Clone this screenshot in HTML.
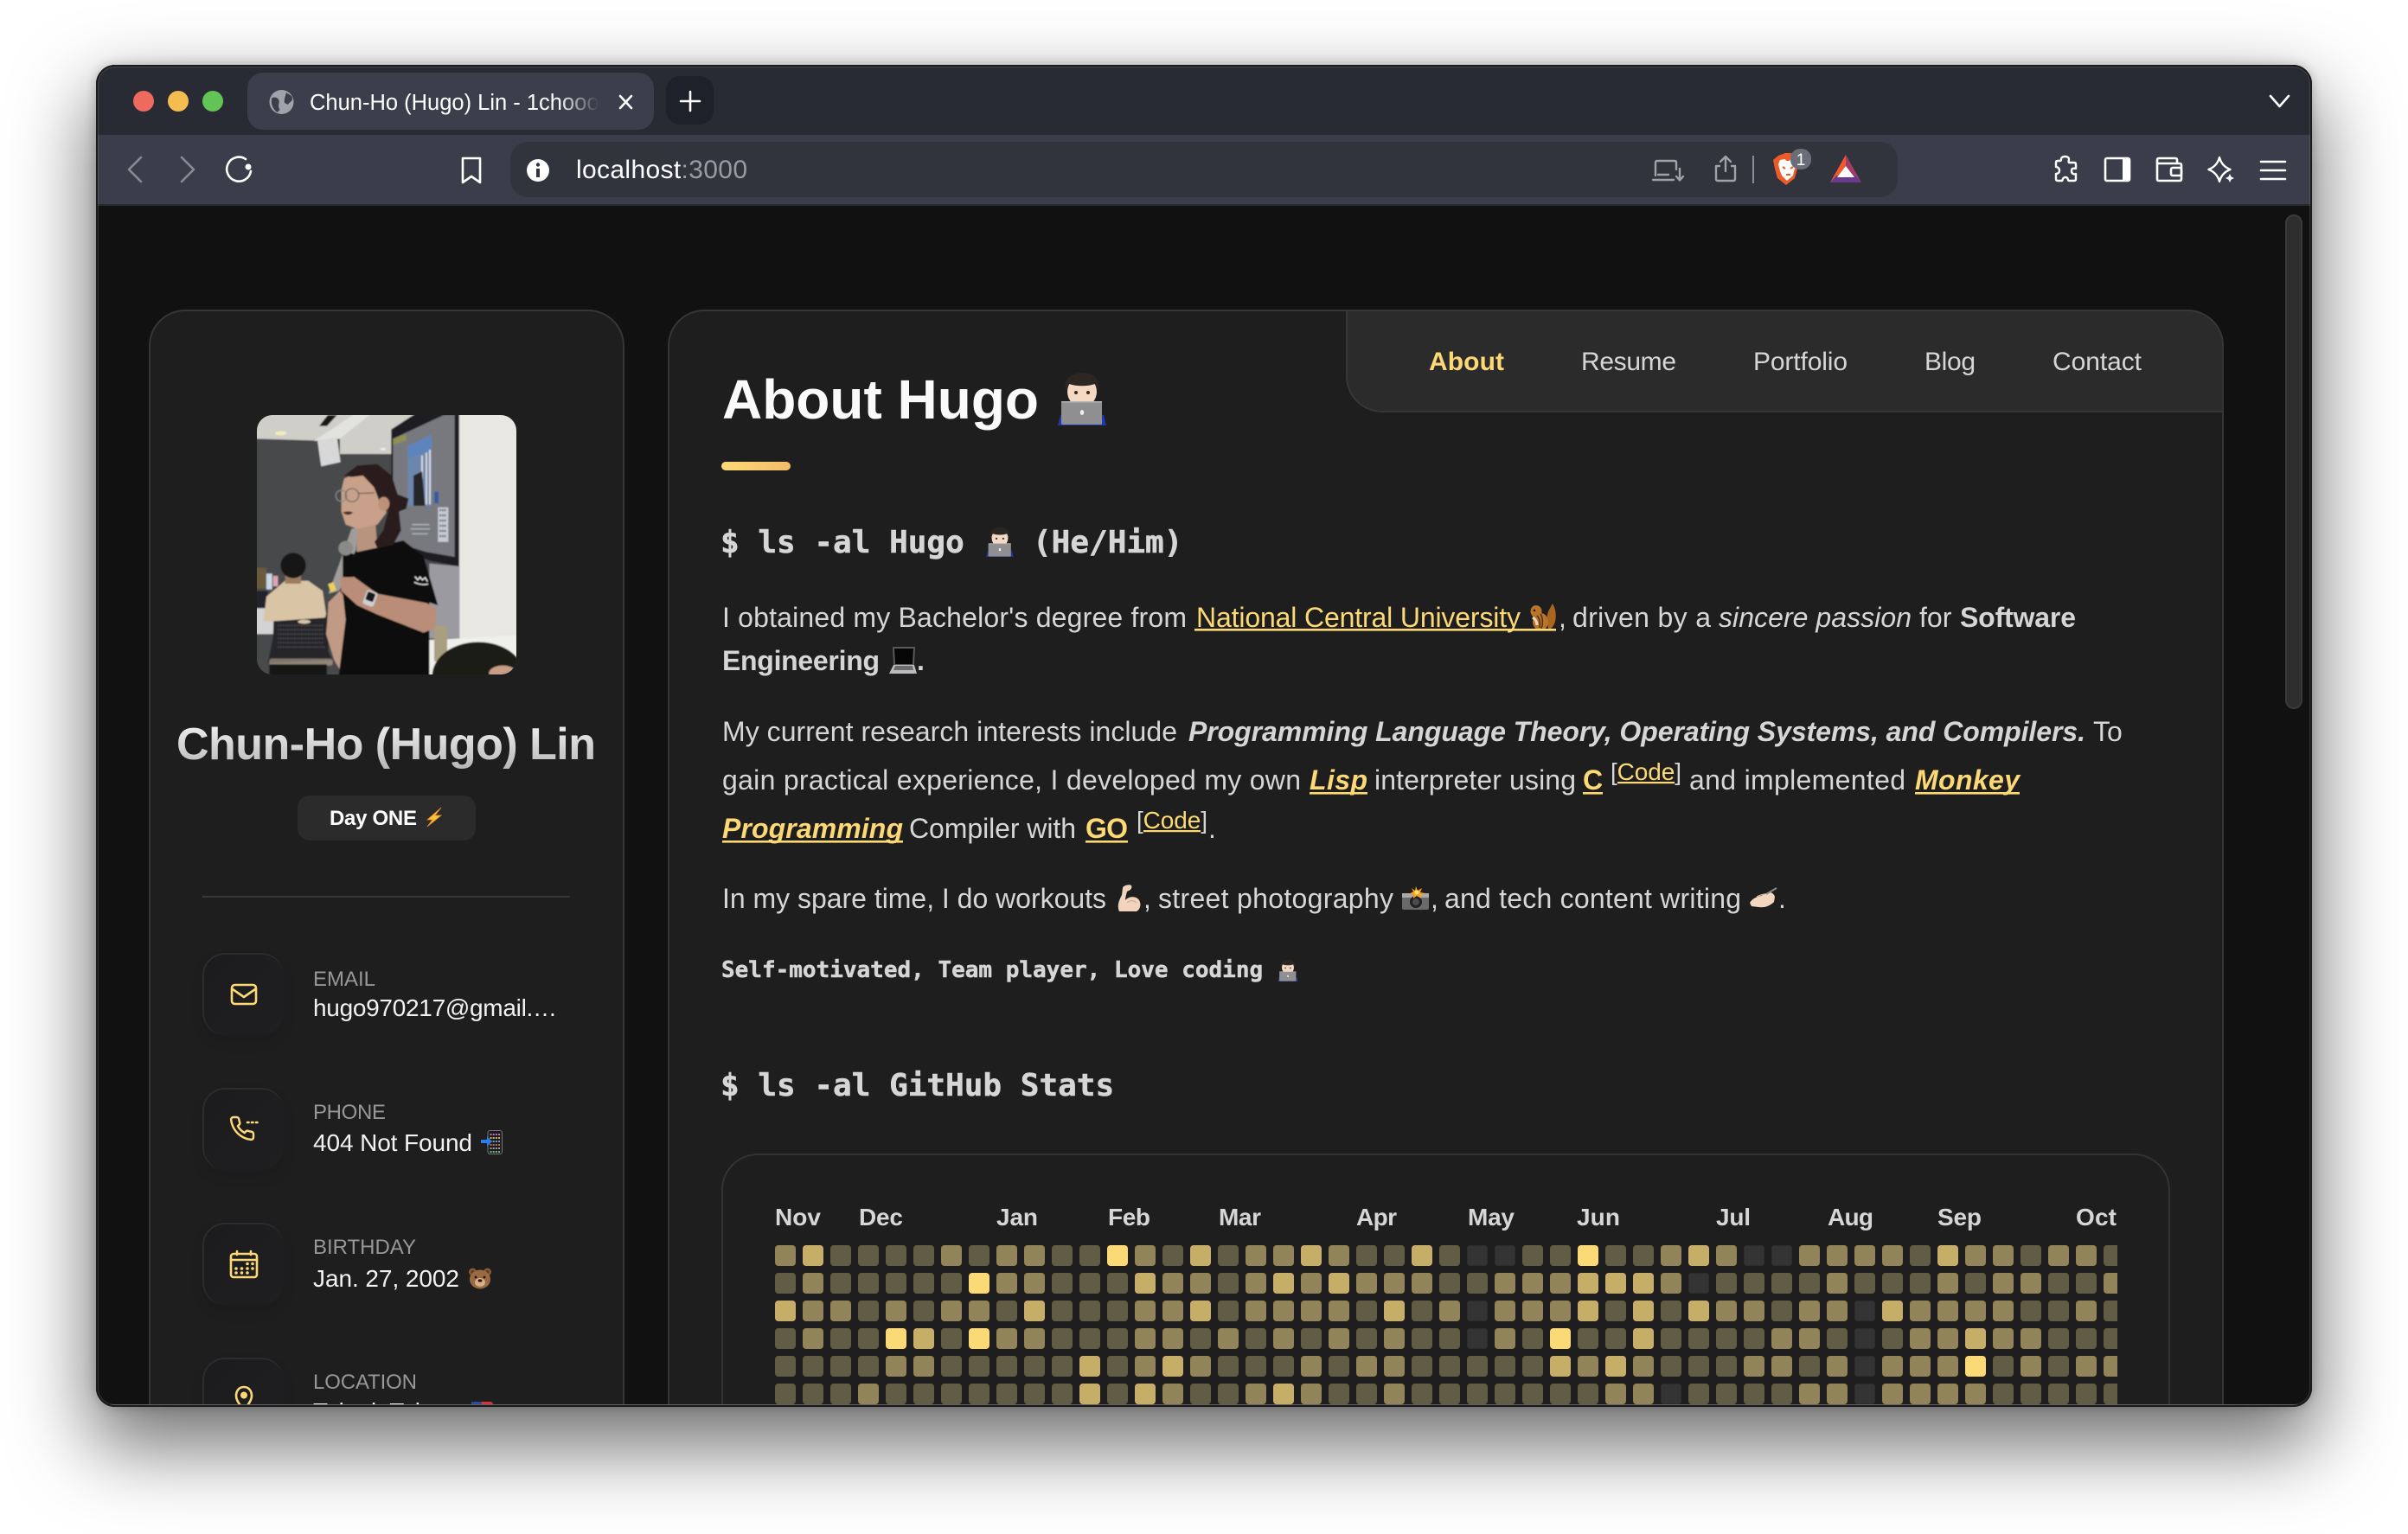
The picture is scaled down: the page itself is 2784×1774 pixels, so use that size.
<!DOCTYPE html>
<html lang="en">
<head>
<meta charset="utf-8">
<title>Chun-Ho (Hugo) Lin - 1chooo</title>
<style>
html,body{margin:0;padding:0;background:#fff;width:2784px;height:1774px;overflow:hidden}
*{box-sizing:border-box}
.abs,.shadow,.win,.in,.card,.ibox,.grid{position:absolute}
.shadow{left:112px;top:76px;width:2560px;height:1550px;border-radius:22px;background:#111;box-shadow:0 40px 90px 8px rgba(0,0,0,.55),0 0 14px rgba(0,0,0,.28)}
.win{left:111px;top:75px;width:2562px;height:1552px;border-radius:22px;overflow:hidden;background:#111}
.in{left:-111px;top:-75px;width:2784px;height:1774px}
.ring{position:absolute;left:111px;top:75px;width:2562px;height:1552px;border-radius:22px;border:2px solid #1a1a1a;box-shadow:inset 0 0 0 1px rgba(255,255,255,.13)}
.card{background:#1e1e1f;border:2px solid #363636;border-radius:42px}
.ibox{left:234px;width:94px;height:95px;border-radius:26px;background:linear-gradient(135deg,#1c1c1f,#1f1f21);border-top:2px solid #2c2c2e;border-left:2px solid #2c2c2e;box-shadow:0 8px 16px rgba(0,0,0,.08)}
.grid{left:896px;top:1440px;width:1552px;height:186px;overflow:hidden;display:grid;grid-template-columns:repeat(49,24px);grid-auto-rows:24px;gap:8px}
.grid i{display:block;border-radius:4px}
.a{background:#343434;box-shadow:inset 0 0 0 1px #2e2e2e}.b{background:#635c45}.c{background:#918458}.d{background:#c6ae69}.e{background:#fbd977}
svg text{font-family:"Liberation Sans",Arial,sans-serif}
.m{font-family:"DejaVu Sans Mono","Liberation Mono",monospace!important;font-weight:700;fill:#d6d6d6;stroke:#d6d6d6;stroke-width:.5px}
.t{font-size:32px;fill:#d6d6d6}
.bd{font-weight:700}
.it{font-style:italic}
.y{fill:#fdd976}
.lab{font-size:24px;fill:#979797}
.val{font-size:28px;fill:#f2f2f2}
.nav{font-size:30px;fill:#d6d6d6}
.mo{font-size:28px;font-weight:700;fill:#d6d6d6}
.ol{fill:none;stroke:#fff;stroke-width:2.6;stroke-linecap:round;stroke-linejoin:round}
.gi{fill:none;stroke:#a0a2a8;stroke-width:2.4;stroke-linecap:round;stroke-linejoin:round}
.yi{fill:none;stroke:#fdd976;stroke-width:2.6;stroke-linecap:round;stroke-linejoin:round}
</style>
</head>
<body>
<div class="shadow"></div>
<div class="win"><div class="in">

<!-- browser chrome -->
<div class="abs" style="left:0;top:0;width:2784px;height:156px;background:#292b34"></div>
<div class="abs" style="left:0;top:156px;width:2784px;height:80px;background:#3b3e4a"></div>
<div class="abs" style="left:0;top:236px;width:2784px;height:2px;background:#2a2c33"></div>
<div class="abs" style="left:286px;top:84px;width:470px;height:66px;border-radius:18px;background:#3c3f4b"></div>
<div class="abs" style="left:770px;top:88px;width:55px;height:56px;border-radius:16px;background:#1f212a"></div>
<div class="abs" style="left:590px;top:164px;width:1604px;height:64px;border-radius:20px;background:#31333d"></div>

<!-- page -->
<div class="abs" style="left:0;top:238px;width:2784px;height:1540px;background:#111"></div>

<div class="abs" style="left:2642px;top:248px;width:20px;height:572px;border-radius:10px;background:#2e2e2e;border:2px solid #3a3a3a"></div>

<div class="card" style="left:172px;top:358px;width:550px;height:1400px"></div>
<div class="card" style="left:772px;top:358px;width:1799px;height:1400px"></div>
<div class="abs" style="left:1556px;top:358px;width:1015px;height:119px;background:#2b2b2c;border:2px solid #363636;border-radius:0 42px 0 42px"></div>

<div class="abs" style="left:344px;top:920px;width:206px;height:52px;border-radius:14px;background:#2b2b2c"></div>
<div class="abs" style="left:234px;top:1036px;width:425px;height:2px;background:#383838"></div>

<div class="ibox" style="top:1102px"></div>
<div class="ibox" style="top:1258px"></div>
<div class="ibox" style="top:1414px"></div>
<div class="ibox" style="top:1570px"></div>

<div class="abs" style="left:834px;top:534px;width:80px;height:10px;border-radius:5px;background:linear-gradient(90deg,#fdd976,#f5bb6a)"></div>

<div class="abs" style="left:834px;top:1334px;width:1675px;height:400px;border-radius:42px;border:2px solid #333"></div>

<!-- photo -->
<div class="abs" style="left:297px;top:480px;width:300px;height:300px;border-radius:18px;overflow:hidden;background:#4c4f52">
<svg width="300" height="300" viewBox="52 30 900 900" style="display:block">
<defs><filter id="bl" x="-5%" y="-5%" width="110%" height="110%"><feGaussianBlur stdDeviation="2.6"/></filter></defs>
<g filter="url(#bl)">
<rect x="40" y="20" width="930" height="930" fill="#47494c"/>
<polygon points="40,20 640,20 520,80 520,165 340,165 340,112 250,118 40,112" fill="#cfcec9"/>
<polygon points="250,120 400,20 455,20 340,112" fill="#e2e2de"/>
<polygon points="268,68 298,30 330,30 295,68" fill="#151515"/>
<ellipse cx="135" cy="93" rx="20" ry="7" fill="#f4efb8"/>
<ellipse cx="490" cy="148" rx="10" ry="4" fill="#f0f0f0"/>
<polygon points="262,118 330,108 342,193 275,208" fill="#d8d8d8"/>
<polygon points="518,80 610,20 752,20 752,555 650,535 518,480" fill="#1d1e20"/>
<polygon points="524,112 700,30 738,30 738,522 640,505 524,470" fill="#77797f"/>
<polygon points="524,112 570,96 570,118 524,134" fill="#8f8f52"/>
<polygon points="575,138 658,98 658,345 575,345" fill="#6d86ad"/>
<polygon points="575,138 658,98 658,150 575,180" fill="#5d84bd"/>
<path d="M625 170V340M640 160V340M652 150V340" stroke="#d8d8dc" stroke-width="6"/>
<polygon points="595,240 625,225 635,345 595,345" fill="#25262a"/>
<rect x="668" y="296" width="14" height="40" fill="#3858a0"/>
<rect x="680" y="350" width="36" height="120" fill="#c8cbd2"/>
<path d="M686 360H710M686 378H710M686 396H710M686 414H710M686 432H710M686 450H710" stroke="#444a66" stroke-width="7" stroke-dasharray="5 3"/>
<path d="M590 410H650M585 425H652M590 442H645" stroke="#b5b8b6" stroke-width="4"/>
<rect x="754" y="20" width="210" height="920" fill="#e9e7e1"/>
<polygon points="650,545 755,555 755,805 650,805" fill="#9a9aa0"/>
<polygon points="650,810 950,795 960,940 650,940" fill="#efefeb"/>
<rect x="667" y="760" width="45" height="125" rx="5" fill="#a89e80"/>
<rect x="40" y="560" width="45" height="72" fill="#6b5a3a"/>
<rect x="85" y="580" width="20" height="55" fill="#c8d8e8"/>
<rect x="108" y="588" width="17" height="36" fill="#dfa6b4"/>
<rect x="40" y="640" width="50" height="60" fill="#20232a"/>
<rect x="40" y="700" width="70" height="90" fill="#d3d3d3"/>
<polygon points="75,745 85,660 150,605 230,605 280,640 292,720 285,745" fill="#d9c4a6"/>
<rect x="150" y="585" width="55" height="30" fill="#9e7a60"/>
<ellipse cx="178" cy="552" rx="44" ry="44" fill="#191512"/>
<polygon points="110,745 300,732 300,850 315,880 90,890 108,800" fill="#26262a"/>
<path d="M125 760H285M125 775H285M125 790H285M125 805H285M125 820H285M125 835H290" stroke="#5a5a5a" stroke-width="5" stroke-dasharray="3 5"/>
<ellipse cx="216" cy="747" rx="22" ry="7" fill="#d9c4a6"/>
<rect x="95" y="875" width="220" height="24" rx="8" fill="#d9c4a6" opacity=".5"/>
<rect x="95" y="895" width="200" height="40" fill="#161616"/>
<polygon points="335,640 365,600 395,500 405,420 380,425 340,540 300,650" fill="#9e9d9a"/>
<polygon points="300,680 340,640 375,690 360,760 350,930 320,880 292,790 298,720" fill="#c09a84"/>
<rect x="303" y="612" width="20" height="30" fill="#ecd05a" transform="rotate(-20 313 627)"/>
<polygon points="395,500 470,485 560,465 630,520 680,690 650,680 650,940 335,940 360,740 345,600" fill="#111"/>
<polygon points="380,585 470,650 640,682 675,700 670,770 630,785 470,722 400,690 345,640 340,595" fill="#b98d77"/>
<rect x="350" y="510" width="38" height="82" rx="6" fill="#111"/>
<circle cx="360" cy="492" r="25" fill="#8a8a88"/>
<rect x="425" y="640" width="40" height="52" rx="8" fill="#cfcfcf" transform="rotate(20 445 666)"/>
<rect x="432" y="645" width="28" height="30" rx="5" fill="#16181a" transform="rotate(20 445 660)"/>
<path d="M600 590l10 12 8-10 8 10 10-8 8 14M598 610q25 12 48 6" stroke="#f0f0f0" stroke-width="4" fill="none"/>
<polygon points="400,390 462,390 470,490 398,505" fill="#b8947e"/>
<polygon points="345,290 355,250 400,230 470,240 500,330 500,370 470,410 400,425 360,410 352,385 345,365" fill="#c9a08a"/>
<path d="M355 240L400 205 470 200 520 240 540 305 578 320 570 355 545 365 552 430 525 480 470 492 460 470 490 430 508 362 482 345 470 310 458 280 420 240 380 245Z" fill="#2a1f1a"/>
<ellipse cx="492" cy="338" rx="20" ry="24" fill="#bd917a"/>
<circle cx="345" cy="310" r="19" fill="none" stroke="#8a8a8a" stroke-width="4"/>
<circle cx="382" cy="308" r="23" fill="none" stroke="#6a6a6a" stroke-width="4"/>
<path d="M404 302L460 300" stroke="#444" stroke-width="3"/>
<path d="M350 368q18-8 36 0q-18 16-36 0Z" fill="#4a2620"/>
<ellipse cx="820" cy="935" rx="160" ry="118" fill="#1e1a18"/>
<ellipse cx="905" cy="925" rx="48" ry="26" fill="#c99e86"/>
</g>
</svg>
</div>

<!-- grid -->
<div class="grid">
<i class=c></i><i class=d></i><i class=b></i><i class=b></i><i class=b></i><i class=b></i><i class=c></i><i class=b></i><i class=c></i><i class=c></i><i class=b></i><i class=b></i><i class=e></i><i class=c></i><i class=b></i><i class=d></i><i class=b></i><i class=c></i><i class=c></i><i class=d></i><i class=c></i><i class=b></i><i class=b></i><i class=d></i><i class=b></i><i class=a></i><i class=a></i><i class=b></i><i class=b></i><i class=e></i><i class=b></i><i class=b></i><i class=c></i><i class=d></i><i class=c></i><i class=a></i><i class=a></i><i class=c></i><i class=c></i><i class=c></i><i class=c></i><i class=b></i><i class=d></i><i class=c></i><i class=c></i><i class=b></i><i class=c></i><i class=c></i><i class=b></i>
<i class=b></i><i class=c></i><i class=b></i><i class=b></i><i class=b></i><i class=b></i><i class=b></i><i class=e></i><i class=c></i><i class=c></i><i class=b></i><i class=b></i><i class=b></i><i class=d></i><i class=c></i><i class=c></i><i class=b></i><i class=c></i><i class=d></i><i class=c></i><i class=d></i><i class=c></i><i class=c></i><i class=c></i><i class=b></i><i class=b></i><i class=c></i><i class=c></i><i class=c></i><i class=d></i><i class=d></i><i class=d></i><i class=c></i><i class=a></i><i class=b></i><i class=b></i><i class=b></i><i class=b></i><i class=c></i><i class=b></i><i class=b></i><i class=b></i><i class=c></i><i class=b></i><i class=c></i><i class=c></i><i class=b></i><i class=b></i><i class=c></i>
<i class=d></i><i class=c></i><i class=c></i><i class=b></i><i class=c></i><i class=b></i><i class=c></i><i class=c></i><i class=b></i><i class=d></i><i class=b></i><i class=b></i><i class=b></i><i class=c></i><i class=c></i><i class=d></i><i class=b></i><i class=c></i><i class=c></i><i class=c></i><i class=c></i><i class=b></i><i class=d></i><i class=b></i><i class=c></i><i class=a></i><i class=c></i><i class=c></i><i class=c></i><i class=d></i><i class=b></i><i class=d></i><i class=b></i><i class=d></i><i class=c></i><i class=c></i><i class=b></i><i class=c></i><i class=c></i><i class=a></i><i class=d></i><i class=c></i><i class=c></i><i class=c></i><i class=c></i><i class=b></i><i class=b></i><i class=c></i><i class=b></i>
<i class=b></i><i class=c></i><i class=b></i><i class=b></i><i class=e></i><i class=d></i><i class=b></i><i class=e></i><i class=c></i><i class=c></i><i class=b></i><i class=b></i><i class=b></i><i class=c></i><i class=c></i><i class=b></i><i class=c></i><i class=b></i><i class=c></i><i class=b></i><i class=c></i><i class=b></i><i class=c></i><i class=b></i><i class=b></i><i class=a></i><i class=c></i><i class=b></i><i class=e></i><i class=b></i><i class=b></i><i class=d></i><i class=b></i><i class=b></i><i class=b></i><i class=b></i><i class=c></i><i class=c></i><i class=b></i><i class=a></i><i class=b></i><i class=c></i><i class=c></i><i class=d></i><i class=c></i><i class=c></i><i class=b></i><i class=b></i><i class=b></i>
<i class=b></i><i class=b></i><i class=b></i><i class=b></i><i class=c></i><i class=c></i><i class=b></i><i class=b></i><i class=b></i><i class=b></i><i class=b></i><i class=d></i><i class=b></i><i class=c></i><i class=d></i><i class=c></i><i class=b></i><i class=b></i><i class=b></i><i class=c></i><i class=b></i><i class=c></i><i class=c></i><i class=b></i><i class=b></i><i class=b></i><i class=b></i><i class=b></i><i class=d></i><i class=c></i><i class=d></i><i class=c></i><i class=b></i><i class=b></i><i class=b></i><i class=c></i><i class=c></i><i class=b></i><i class=c></i><i class=a></i><i class=c></i><i class=c></i><i class=c></i><i class=e></i><i class=b></i><i class=c></i><i class=b></i><i class=c></i><i class=c></i>
<i class=b></i><i class=b></i><i class=b></i><i class=c></i><i class=b></i><i class=b></i><i class=b></i><i class=b></i><i class=b></i><i class=b></i><i class=b></i><i class=d></i><i class=b></i><i class=d></i><i class=c></i><i class=b></i><i class=b></i><i class=c></i><i class=d></i><i class=c></i><i class=b></i><i class=b></i><i class=c></i><i class=b></i><i class=b></i><i class=b></i><i class=b></i><i class=b></i><i class=b></i><i class=b></i><i class=c></i><i class=c></i><i class=a></i><i class=b></i><i class=b></i><i class=b></i><i class=b></i><i class=c></i><i class=c></i><i class=a></i><i class=c></i><i class=c></i><i class=c></i><i class=c></i><i class=b></i><i class=b></i><i class=b></i><i class=b></i><i class=b></i>
</div>

<!-- overlay: text and icons -->
<svg class="abs" style="left:0;top:0" width="2784" height="1774" viewBox="0 0 2784 1774" xmlns="http://www.w3.org/2000/svg">
<defs>
<linearGradient id="nm" gradientUnits="userSpaceOnUse" x1="0" y1="838" x2="0" y2="892"><stop offset="0" stop-color="#eeeeee"/><stop offset="1" stop-color="#b4b4b4"/></linearGradient>
<linearGradient id="tf" gradientUnits="userSpaceOnUse" x1="645" y1="0" x2="692" y2="0"><stop offset="0" stop-color="#fff"/><stop offset="1" stop-color="#fff" stop-opacity="0"/></linearGradient>
<symbol id="tech" viewBox="0 0 56 61">
<path d="M0 61l3-12h50l3 12z" fill="#2238a8"/>
<ellipse cx="28" cy="22" rx="17" ry="18" fill="#f3d8c4"/>
<path d="M9 21C6 6 17 0 28 0s22 6 19 21c-1-3-2-6-4-8-9 3-21 3-30 0-2 2-3 5-4 8z" fill="#2d2724"/>
<circle cx="21" cy="23" r="2" fill="#3a2a22"/><circle cx="35" cy="23" r="2" fill="#3a2a22"/>
<rect x="4" y="33" width="47" height="27" rx="1.5" fill="#8f8f91"/>
<rect x="4" y="33" width="47" height="1.5" fill="#b5b5b7"/>
<ellipse cx="28" cy="46" rx="2.2" ry="3" fill="#f0f0f0"/>
</symbol>
<symbol id="chip" viewBox="0 0 34 31">
<path d="M24 30C33 26 34 10 28 0c-3 6-7 10-6 18 0 5 0 9 2 12z" fill="#a8661f"/>
<ellipse cx="14" cy="21" rx="9" ry="10" fill="#b8742a"/>
<ellipse cx="9" cy="9" rx="6.5" ry="7" fill="#b8742a"/>
<path d="M14 12c3 4 3 12 1 17M10 14c3 3 4 8 3 14" stroke="#4a2a10" stroke-width="1.4" fill="none"/>
<circle cx="7" cy="8" r="1.2" fill="#111"/>
<path d="M5 16c3 2 5 5 5 9" stroke="#e8d8b8" stroke-width="3" fill="none"/>
</symbol>
<symbol id="lap" viewBox="0 0 32 31">
<polygon points="4,0 30,0 29,21 5,21" fill="#5a5a5c"/>
<polygon points="6,2 28,2 27,20 7,20" fill="#060606"/>
<polygon points="5,21 29,21 32,31 0,31" fill="#bcbcbe"/>
<polygon points="7,22 27,22 28,27 5,27" fill="#6c6c6e"/>
</symbol>
<symbol id="mus" viewBox="0 0 31 31">
<path d="M3 31C0 24 3 18 6 12l1-8c0-3 8-5 10-3 1 2 0 5-3 6l-2 1c-1 4-2 7-2 10 4-5 13-5 16 0 3 5 1 11-3 13z" fill="#f2d4bc"/>
<path d="M12 21c3-3 8-3 11 0" stroke="#d6ae92" stroke-width="1.2" fill="none"/>
</symbol>
<symbol id="cam" viewBox="0 0 31 27">
<rect x="0" y="8" width="31" height="19" rx="2" fill="#6a6a6c"/>
<rect x="0" y="8" width="31" height="5" fill="#aaa"/>
<circle cx="16" cy="18" r="7" fill="#222"/><circle cx="16" cy="18" r="4" fill="#4a4a50"/>
<polygon points="16,0 18,5 23,2 21,7 27,8 21,10 22,14 17,11 13,14 13,10 8,9 13,6 11,2 15,5" fill="#f8a020"/>
<circle cx="17" cy="7" r="2.5" fill="#ffe680"/>
</symbol>
<symbol id="wri" viewBox="0 0 32 27">
<path d="M0 18c3-5 8-7 13-8l8-4c4-1 7 2 8 5l-1 6c-5 5-11 7-18 6l-8-1z" fill="#f3d6c0"/>
<path d="M8 11c4-2 7-3 10-3" stroke="#d8b49a" stroke-width="1.2" fill="none"/>
<path d="M19 8L31 1" stroke="#8a8a8a" stroke-width="2"/>
</symbol>
<symbol id="tel" viewBox="0 0 25 28">
<rect x="8" y="0.5" width="16.5" height="27" rx="2.5" fill="#1b1b1d" stroke="#7a7a7c" stroke-width="1"/>
<path d="M10.5 5H22.5" stroke="#c86ad0" stroke-width="2" stroke-dasharray="2 1.2"/>
<path d="M10.5 9H22.5" stroke="#e0b040" stroke-width="2" stroke-dasharray="2 1.2"/>
<path d="M10.5 13H22.5" stroke="#58a0e0" stroke-width="2" stroke-dasharray="2 1.2"/>
<path d="M10.5 17H22.5" stroke="#d06060" stroke-width="2" stroke-dasharray="2 1.2"/>
<path d="M10.5 21H22.5" stroke="#a0a0a0" stroke-width="2" stroke-dasharray="2 1.2"/>
<path d="M10.5 25H22.5" stroke="#60c878" stroke-width="2" stroke-dasharray="2 1.2"/>
<path d="M0 11h7V7l6 6-6 6v-4H0z" fill="#2b7ce8"/>
</symbol>
<symbol id="bear" viewBox="0 0 26 25">
<circle cx="4.5" cy="5" r="4.5" fill="#8a5a34"/><circle cx="21.5" cy="5" r="4.5" fill="#8a5a34"/>
<circle cx="4.5" cy="5" r="2" fill="#5c3a20"/><circle cx="21.5" cy="5" r="2" fill="#5c3a20"/>
<ellipse cx="13" cy="13.5" rx="12" ry="11" fill="#9a6a40"/>
<ellipse cx="13" cy="17" rx="6" ry="5" fill="#d8b088"/>
<ellipse cx="13" cy="15" rx="2.4" ry="1.6" fill="#2a1a12"/>
<circle cx="8" cy="11" r="1.4" fill="#1a120c"/><circle cx="18" cy="11" r="1.4" fill="#1a120c"/>
</symbol>
</defs>

<!-- window controls -->
<circle cx="166" cy="117" r="12" fill="#ee6a5f"/>
<circle cx="206" cy="117" r="12" fill="#f5bd4f"/>
<circle cx="246" cy="117" r="12" fill="#61c454"/>
<circle cx="325.5" cy="118" r="14" fill="#a0a3aa"/>
<path d="M314.5 113c4-1 7 0 8 3s-2 6 1 11l-3 3c-5-4-8-10-6-17zM331 107c2 2 7 3 7 7s-4 4-5 7l-4-2c-1-4 1-8 2-12z" fill="#3c3f4b"/>
<text x="358" y="127" font-size="25.5" fill="url(#tf)">Chun-Ho (Hugo) Lin - 1chooo</text>
<path class="ol" d="M717 111l13 14M730 111l-13 14"/>
<path class="ol" d="M798 106v22M787 117h22"/>
<path d="M2625 111l10.5 12 10.5-12" class="ol"/>

<!-- toolbar -->
<path d="M163 182l-14 14 14 14" fill="none" stroke="#8a8c94" stroke-width="2.6" stroke-linecap="round" stroke-linejoin="round"/>
<path d="M210 182l14 14-14 14" fill="none" stroke="#8a8c94" stroke-width="2.6" stroke-linecap="round" stroke-linejoin="round"/>
<path class="ol" d="M284 184a14 14 0 1 0 6 14"/>
<circle cx="287" cy="193" r="3.5" fill="#fff"/>
<path class="ol" d="M535 183h20v28l-10-7-10 7z"/>
<circle cx="622" cy="197" r="13" fill="#fff"/>
<rect x="620" y="195" width="4" height="10" fill="#31333d"/><circle cx="622" cy="190.5" r="2.2" fill="#31333d"/>
<text x="666" y="206" font-size="30" textLength="198" fill="#fff">localhost<tspan fill="#9a9ca3">:3000</tspan></text>
<path class="gi" d="M1914 203v-15q0-2 2-2h20q2 0 2 2v8M1911 208h24"/>
<path class="gi" d="M1917 202h12M1942 195v13m-4-4l4 4.5 4-4.5"/>
<path class="gi" d="M1988 192h-4v15q0 2 2 2h18q2 0 2-2v-15h-4M1995 198v-17m-6 6l6-6 6 6"/>
<rect x="2026" y="180" width="2" height="32" fill="#8a8c94"/>
<path d="M2056 180l8-3h6l8 3 2 5-2 10-3 11-10 8-10-8-3-11-2-10z" fill="#ef5a29"/>
<path d="M2058 185l6-1 1 2h4l1-2 6 1 1 5-3 8-1 5-7 6-6-6-2-5-2-8z" fill="#fff"/>
<path d="M2061 193l3 2M2073 193l-3 2M2065 202h5" stroke="#ef5a29" stroke-width="2" fill="none"/>
<rect x="2070" y="172" width="24" height="24" rx="11" fill="#6a6d78"/>
<text x="2082" y="191" font-size="19" text-anchor="middle" fill="#fff">1</text>
<polygon points="2134,179 2116,211 2134,211" fill="#f05a2a"/>
<polygon points="2134,179 2152,211 2134,211" fill="#a03c6a"/>
<polygon points="2116,211 2152,211 2145,203 2123,203" fill="#6a3a8e"/>
<polygon points="2134,192 2144,205 2124,205" fill="#fff"/>
<path class="ol" d="M2383 184c0-4 9-4 9 0 0 2-1 3 0 4h6q2 0 2 2v5c-4-1-5 0-5 3s3 4 5 3v6q0 2-2 2h-6c-2 0 0-4-4-4s-3 4-4 4h-5q-2 0-2-2v-6c2 0 4-1 4-4s-3-4-4-4v-5q0-2 2-2h3c1 0 1-1 1-2z" style="stroke-width:2.4"/>
<rect x="2434" y="183" width="28" height="26" rx="2" class="ol"/>
<rect x="2454" y="183" width="9" height="26" fill="#fff"/>
<path class="ol" d="M2517 189v-4q0-2-2-2h-19q-2 0-2 2v22q0 2 2 2h24q2 0 2-2v-16q0-2-2-2h-26"/>
<rect x="2510" y="194" width="12" height="9" rx="2" class="ol"/>
<path class="ol" d="M2566 182c1.5 6 5 11 12.5 14-7.5 3-11 8-12.5 14-1.5-6-5-11-12.5-14 7.500-3 11-8 12.500-14z" style="stroke-width:2.4"/>
<path d="M2578 201l1.6 3.4 3.4 1.6-3.4 1.6-1.6 3.400-1.600-3.400-3.400-1.600 3.400-1.600z" fill="#fff"/>
<path class="ol" d="M2614 187h28M2614 197h28M2614 207h28"/>

<!-- sidebar -->
<text x="204" y="878" font-size="52" font-weight="700" textLength="485" fill="url(#nm)">Chun-Ho (Hugo) Lin</text>
<text x="381" y="954" font-size="24" font-weight="700" textLength="101" fill="#fff">Day ONE</text>
<polygon points="510,934 494,948 500,948 494,956 510,943 503,943" fill="#f5c23a" stroke="#e8882a" stroke-width=".8"/>

<rect x="268" y="1139" width="28" height="22" rx="3.5" class="yi"/>
<path class="yi" d="M269 1144l13 9 13-9"/>
<text x="362" y="1140" class="lab" textLength="72">EMAIL</text>
<text x="362" y="1175" class="val" textLength="282">hugo970217@gmail.…</text>

<g transform="translate(264.4 1289.4) scale(1.3)"><path d="M22 16.92v3a2 2 0 0 1-2.18 2 19.79 19.79 0 0 1-8.63-3.07 19.5 19.5 0 0 1-6-6 19.79 19.79 0 0 1-3.07-8.67A2 2 0 0 1 4.11 2h3a2 2 0 0 1 2 1.72 12.84 12.84 0 0 0 .7 2.81 2 2 0 0 1-.45 2.11L8.09 9.91a16 16 0 0 0 6 6l1.27-1.27a2 2 0 0 1 2.11-.45 12.84 12.84 0 0 0 2.81.7A2 2 0 0 1 22 16.92z" fill="none" stroke="#fdd976" stroke-width="1.9" stroke-linejoin="round"/></g>
<path d="M286 1298h1.5M291 1298h1.5M296 1298h1.5" stroke="#fdd976" stroke-width="2.6" stroke-linecap="round"/>
<text x="362" y="1294" class="lab" textLength="84">PHONE</text>
<text x="362" y="1331" class="val" textLength="184">404 Not Found</text>
<use href="#tel" x="556" y="1307" width="25" height="28"/>

<rect x="267" y="1450" width="30" height="27" rx="3" class="yi"/>
<path class="yi" d="M267 1457h30M274 1447v4M290 1447v4"/>
<g fill="#fdd976"><circle cx="286" cy="1461.5" r="1.8"/><circle cx="292" cy="1461.5" r="1.8"/><circle cx="273" cy="1467" r="1.8"/><circle cx="279.5" cy="1467" r="1.8"/><circle cx="286" cy="1467" r="1.8"/><circle cx="292" cy="1467" r="1.8"/><circle cx="273" cy="1472" r="1.8"/><circle cx="279.5" cy="1472" r="1.8"/><circle cx="286" cy="1472" r="1.8"/></g>
<text x="362" y="1450" class="lab" textLength="119">BIRTHDAY</text>
<text x="362" y="1488" class="val" textLength="169">Jan. 27, 2002</text>
<use href="#bear" x="542" y="1466" width="26" height="25"/>

<path class="yi" d="M282 1604c-6 0-9 5-9 10 0 6 5 11 9 17 4-6 9-11 9-17 0-5-3-10-9-10z"/>
<circle cx="282" cy="1613.5" r="4" fill="#fdd976"/>
<text x="362" y="1606" class="lab" textLength="120">LOCATION</text>
<text x="362" y="1642" class="val">Taipei, Taiwan</text>
<rect x="545" y="1621" width="25" height="16" rx="3" fill="#d8323c"/><rect x="545" y="1621" width="12" height="8" fill="#2a4a9a"/>

<!-- nav -->
<text x="1652" y="428" class="nav bd" style="fill:#fdd976" textLength="87">About</text>
<text x="1828" y="428" class="nav" textLength="110">Resume</text>
<text x="2027" y="428" class="nav" textLength="109">Portfolio</text>
<text x="2225" y="428" class="nav" textLength="59">Blog</text>
<text x="2373" y="428" class="nav" textLength="103">Contact</text>

<!-- about -->
<text x="835" y="484" font-size="64" font-weight="700" textLength="366" fill="#fafafa">About Hugo</text>
<use href="#tech" x="1223" y="431" width="56" height="61"/>
<text x="833" y="639" font-size="36" class="m">$ ls -al Hugo</text>
<use href="#tech" x="1140" y="610" width="32" height="34"/>
<text x="1194" y="639" font-size="36" class="m">(He/Him)</text>

<!-- paragraph 1 -->
<text x="835" y="725" class="t" textLength="537">I obtained my Bachelor's degree from</text>
<text x="1383" y="725" class="t y" textLength="375">National Central University</text>
<use href="#chip" x="1767" y="698" width="34" height="31"/>
<rect x="1381" y="727" width="418" height="2.6" fill="#fdd976"/>
<text x="1802" y="725" class="t">,</text>
<text x="1818" y="725" class="t" textLength="160">driven by a</text>
<text x="1987" y="725" class="t it" textLength="223">sincere passion</text>
<text x="2219" y="725" class="t">for</text>
<text x="2266" y="725" class="t bd" textLength="134">Software</text>
<text x="835" y="775" class="t bd" textLength="182">Engineering</text>
<use href="#lap" x="1028" y="748" width="32" height="31"/>
<text x="1060" y="775" class="t bd">.</text>

<!-- paragraph 2 -->
<text x="835" y="857" class="t" textLength="526">My current research interests include</text>
<text x="1374" y="857" class="t bd it" textLength="1037">Programming Language Theory, Operating Systems, and Compilers.</text>
<text x="2420" y="857" class="t">To</text>
<text x="835" y="913" class="t" textLength="669">gain practical experience, I developed my own</text>
<text x="1514" y="913" class="t bd it y" textLength="67">Lisp</text>
<rect x="1514" y="916" width="67" height="2.6" fill="#fdd976"/>
<text x="1589" y="913" class="t" textLength="233">interpreter using</text>
<text x="1830" y="913" class="t bd y">C</text>
<rect x="1830" y="916" width="23" height="2.6" fill="#fdd976"/>
<text x="1862" y="902" font-size="28" fill="#d6d6d6" textLength="82">[<tspan class="y">Code</tspan>]</text>
<rect x="1870" y="904" width="66" height="2.2" fill="#fdd976"/>
<text x="1953" y="913" class="t" textLength="250">and implemented</text>
<text x="2214" y="913" class="t bd it y" textLength="121">Monkey</text>
<rect x="2214" y="916" width="121" height="2.6" fill="#fdd976"/>
<text x="835" y="969" class="t bd it y" textLength="209">Programming</text>
<rect x="835" y="972" width="209" height="2.6" fill="#fdd976"/>
<text x="1051" y="969" class="t" textLength="193">Compiler with</text>
<text x="1255" y="969" class="t bd y" textLength="49">GO</text>
<rect x="1255" y="972" width="49" height="2.6" fill="#fdd976"/>
<text x="1314" y="958" font-size="28" fill="#d6d6d6" textLength="82">[<tspan class="y">Code</tspan>]</text>
<rect x="1322" y="960" width="66" height="2.2" fill="#fdd976"/>
<text x="1397" y="969" class="t">.</text>

<!-- paragraph 3 -->
<text x="835" y="1050" class="t" textLength="444">In my spare time, I do workouts</text>
<use href="#mus" x="1291" y="1023" width="31" height="31"/>
<text x="1322" y="1050" class="t">,</text>
<text x="1339" y="1050" class="t" textLength="272">street photography</text>
<use href="#cam" x="1621" y="1025" width="31" height="27"/>
<text x="1654" y="1050" class="t">,</text>
<text x="1670" y="1050" class="t" textLength="343">and tech content writing</text>
<use href="#wri" x="2023" y="1026" width="32" height="27"/>
<text x="2056" y="1050" class="t">.</text>

<text x="834" y="1130" font-size="26" class="m">Self-motivated, Team player, Love coding</text>
<use href="#tech" x="1477" y="1110" width="24" height="25"/>

<text x="833" y="1267" font-size="36" class="m">$ ls -al GitHub Stats</text>

<!-- months -->
<text x="896" y="1417" class="mo" textLength="53">Nov</text>
<text x="993" y="1417" class="mo" textLength="51">Dec</text>
<text x="1152" y="1417" class="mo" textLength="48">Jan</text>
<text x="1281" y="1417" class="mo" textLength="49">Feb</text>
<text x="1409" y="1417" class="mo" textLength="49">Mar</text>
<text x="1568" y="1417" class="mo" textLength="47">Apr</text>
<text x="1697" y="1417" class="mo" textLength="54">May</text>
<text x="1823" y="1417" class="mo" textLength="50">Jun</text>
<text x="1984" y="1417" class="mo" textLength="40">Jul</text>
<text x="2113" y="1417" class="mo" textLength="53">Aug</text>
<text x="2240" y="1417" class="mo" textLength="51">Sep</text>
<text x="2400" y="1417" class="mo" textLength="47">Oct</text>
</svg>

<div class="abs" style="left:0;top:1624px;width:2784px;height:3px;background:#4a4a4a"></div>
</div></div>
<div class="ring"></div>
</body>
</html>
